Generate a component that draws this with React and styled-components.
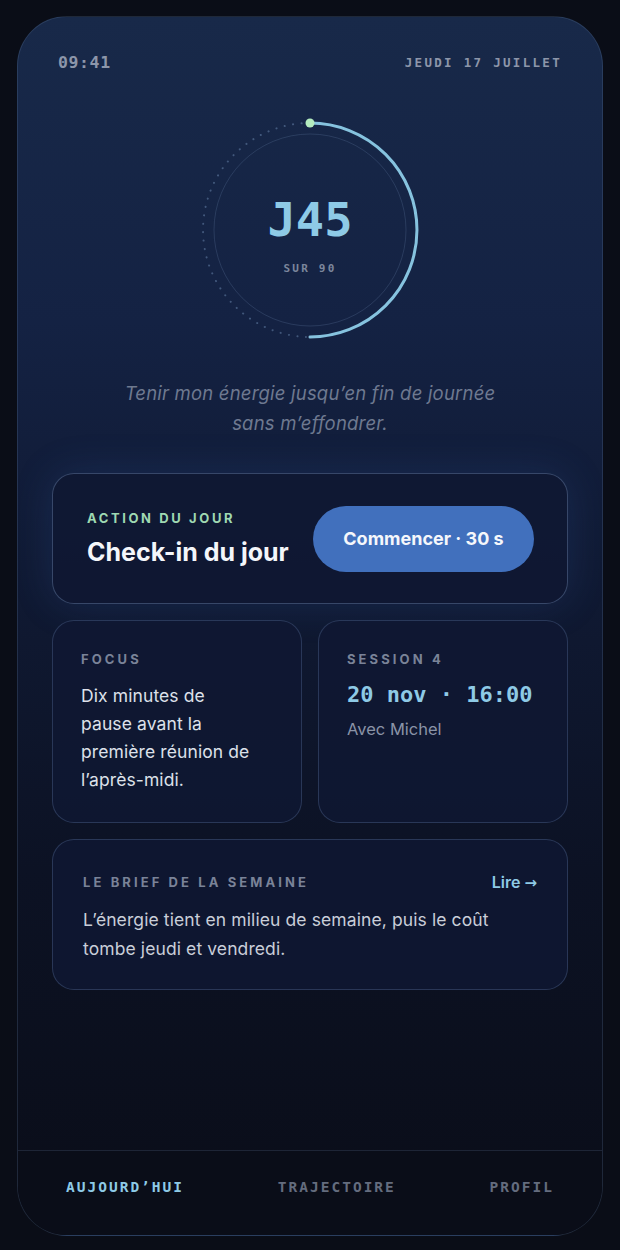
import React from "react";
import styled, { createGlobalStyle } from "styled-components";

const GlobalStyle = createGlobalStyle`
  html, body {
    margin: 0;
    padding: 0;
    background: #0a0d17;
  }
  * { box-sizing: border-box; }
`;

const Page = styled.div`
  width: 620px;
  height: 1250px;
  padding: 16px 17px 14px;
  background: #0a0d17;
  font-family: "Inter", "Open Sans", sans-serif;
`;

const Phone = styled.div`
  height: 100%;
  border-radius: 50px;
  border: 1px solid rgba(110, 135, 175, 0.22);
  background: linear-gradient(180deg, #182949 0%, #142243 25%, #101a34 45%, #0c1224 70%, #0a0d18 100%);
  display: flex;
  flex-direction: column;
  overflow: hidden;
`;

const Main = styled.div`
  flex: 1;
  display: flex;
  flex-direction: column;
  align-items: center;
`;

const StatusBar = styled.div`
  align-self: stretch;
  display: flex;
  justify-content: space-between;
  align-items: center;
  padding: 36px 40px 0 40px;
  font-family: "DejaVu Sans Mono", monospace;
  font-weight: bold;
  color: #8d96aa;
`;

const Time = styled.span`
  font-size: 16.5px;
  letter-spacing: 0.6px;
`;

const DateText = styled.span`
  font-size: 12.5px;
  letter-spacing: 2.3px;
`;

const RingWrap = styled.div`
  position: relative;
  width: 240px;
  height: 240px;
  margin-top: 38px;
`;

const RingLabel = styled.div`
  position: absolute;
  inset: 0;
  display: flex;
  flex-direction: column;
  align-items: center;
  justify-content: center;
`;

const Day = styled.div`
  font-family: "DejaVu Sans Mono", monospace;
  font-weight: bold;
  font-size: 47px;
  color: #8ecae6;
  line-height: 1;
  margin-top: 10px;
`;

const Sur = styled.div`
  font-family: "DejaVu Sans Mono", monospace;
  font-weight: bold;
  font-size: 11px;
  letter-spacing: 2.2px;
  color: #7c869c;
  margin-top: 19px;
`;

const Quote = styled.p`
  margin: 28px 0 0;
  text-align: center;
  font-style: italic;
  font-size: 18.5px;
  letter-spacing: 0.2px;
  line-height: 30px;
  color: #6e7990;
`;

const Cards = styled.div`
  align-self: stretch;
  margin: 35px 34px 0;
  display: flex;
  flex-direction: column;
  gap: 16px;
`;

const Card = styled.div`
  border-radius: 22px;
  border: 1px solid ${(p) => (p.$strong ? "rgba(120, 150, 195, 0.38)" : "rgba(110, 140, 185, 0.28)")};
  background: rgba(15, 24, 50, 0.85);
  padding: ${(p) => p.$pad || "30px 28px"};
  box-shadow: ${(p) => (p.$glow ? "0 0 40px rgba(60, 110, 200, 0.18)" : "none")};
`;

const ActionCard = styled(Card)`
  height: 131px;
  display: flex;
  align-items: center;
  justify-content: space-between;
  padding: 0 33px 0 34px;
`;

const Row = styled.div`
  display: grid;
  grid-template-columns: 1fr 1fr;
  gap: 16px;
`;

const Label = styled.div`
  font-size: 13px;
  font-weight: 700;
  letter-spacing: ${(p) => p.$spacing || "3.1px"};
  color: ${(p) => p.$color || "#7a8398"};
  text-transform: uppercase;
`;

const Title = styled.div`
  font-size: 25px;
  font-weight: 700;
  color: #f4f6fa;
  margin-top: 11px;
`;

const Button = styled.button`
  width: 221px;
  height: 66px;
  border: none;
  border-radius: 33px;
  background: #4170bd;
  color: #f5f7fb;
  font-family: inherit;
  font-size: 18px;
  font-weight: 700;
  cursor: pointer;
`;

const SmallCard = styled(Card)`
  height: 203px;
  padding: 30px 28px;
`;

const Body = styled.div`
  margin-top: ${(p) => p.$mt || "14px"};
  font-size: 17.5px;
  letter-spacing: 0.1px;
  line-height: ${(p) => p.$lh || "28px"};
  color: ${(p) => p.$color || "#dde1ea"};
`;

const Mono = styled.div`
  margin-top: 15px;
  font-family: "DejaVu Sans Mono", monospace;
  font-size: 22px;
  font-weight: bold;
  color: #8ecae6;
`;

const Sub = styled.div`
  margin-top: 12px;
  font-size: 16.5px;
  color: #8a93a7;
`;

const BriefHead = styled.div`
  display: flex;
  justify-content: space-between;
  align-items: center;
`;

const Link = styled.a`
  font-size: 16px;
  font-weight: 600;
  color: #8ecae6;
  text-decoration: none;
`;

const Arrow = styled.span`
  font-family: "DejaVu Sans", sans-serif;
  font-weight: bold;
  font-size: 15px;
`;

const Nav = styled.nav`
  height: 85px;
  border-top: 1px solid rgba(110, 135, 175, 0.2);
  background: #0a0d18;
  display: flex;
  justify-content: space-between;
  align-items: center;
  padding: 0 48px 12px 48px;
`;

const NavItem = styled.span`
  font-family: "DejaVu Sans Mono", monospace;
  font-weight: bold;
  font-size: 14.5px;
  letter-spacing: 2px;
  color: ${(p) => (p.$active ? "#8ecae6" : "#646c7e")};
`;

function Ring() {
  const r = 107;
  const c = 120;
  return (
    <svg width="240" height="240" viewBox="0 0 240 240">
      <circle cx={c} cy={c} r="96" fill="none" stroke="rgba(120,145,185,0.22)" strokeWidth="1" />
      <path
        d={`M ${c} ${c - r} A ${r} ${r} 0 0 0 ${c} ${c + r}`}
        fill="none"
        stroke="rgba(120,150,190,0.45)"
        strokeWidth="2"
        strokeLinecap="round"
        strokeDasharray="0.1 8.4"
      />
      <path
        d={`M ${c} ${c - r} A ${r} ${r} 0 0 1 ${c} ${c + r}`}
        fill="none"
        stroke="#86c3df"
        strokeWidth="3"
        strokeLinecap="round"
      />
      <circle cx={c} cy={c - r} r="4.5" fill="#b4ecbf" />
    </svg>
  );
}

export default function App() {
  return (
    <>
      <GlobalStyle />
      <Page>
        <Phone>
          <Main>
            <StatusBar>
              <Time>09:41</Time>
              <DateText>JEUDI 17 JUILLET</DateText>
            </StatusBar>

            <RingWrap>
              <Ring />
              <RingLabel>
                <Day>J45</Day>
                <Sur>SUR 90</Sur>
              </RingLabel>
            </RingWrap>

            <Quote>
              Tenir mon énergie jusqu’en fin de journée
              <br />
              sans m’effondrer.
            </Quote>

            <Cards>
              <ActionCard $strong $glow>
                <div>
                  <Label $color="#9fd9b2" $spacing="2.6px">Action du jour</Label>
                  <Title>Check-in du jour</Title>
                </div>
                <Button>Commencer · 30 s</Button>
              </ActionCard>

              <Row>
                <SmallCard>
                  <Label>Focus</Label>
                  <Body $mt="15px">
                    Dix minutes de
                    <br />
                    pause avant la
                    <br />
                    première réunion de
                    <br />
                    l’après-midi.
                  </Body>
                </SmallCard>
                <SmallCard>
                  <Label>Session 4</Label>
                  <Mono>20 nov · 16:00</Mono>
                  <Sub>Avec Michel</Sub>
                </SmallCard>
              </Row>

              <Card $pad="32px 30px 26px 30px">
                <BriefHead>
                  <Label>Le brief de la semaine</Label>
                  <Link href="#">
                    Lire <Arrow>→</Arrow>
                  </Link>
                </BriefHead>
                <Body $mt="13px" $lh="29px" $color="#c9ced9">
                  L’énergie tient en milieu de semaine, puis le coût
                  <br />
                  tombe jeudi et vendredi.
                </Body>
              </Card>
            </Cards>
          </Main>

          <Nav>
            <NavItem $active>AUJOURD’HUI</NavItem>
            <NavItem>TRAJECTOIRE</NavItem>
            <NavItem>PROFIL</NavItem>
          </Nav>
        </Phone>
      </Page>
    </>
  );
}
